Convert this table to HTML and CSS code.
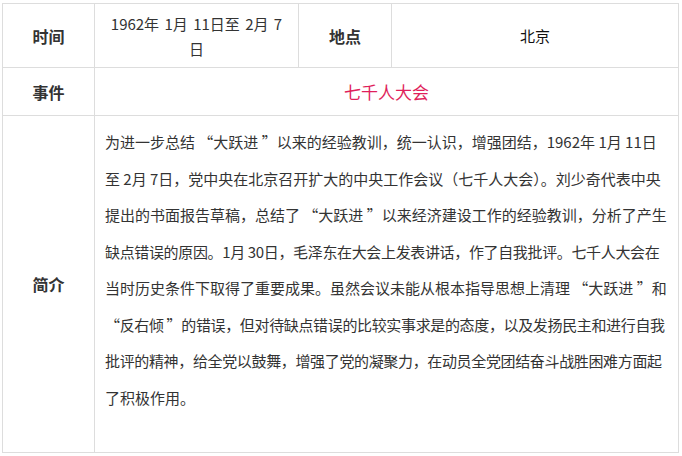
FILE: index.html
```html
<!DOCTYPE html>
<html lang="zh-CN">
<head>
  <meta charset="UTF-8">
  <meta name="viewport" content="width=device-width, initial-scale=1.0">
  <title>七千人大会</title>
  <link rel="stylesheet" href="styles.css">
</head>
<body>
  <div class="wrap">
    <table class="info">
      <colgroup>
        <col class="c-label">
        <col class="c-time">
        <col class="c-label2">
        <col class="c-place">
      </colgroup>
      <tr class="row-top">
        <th>时间</th>
        <td class="time">1962年 1月 11日至 2月 7<br>日</td>
        <th>地点</th>
        <td class="place">北京</td>
      </tr>
      <tr class="row-event">
        <th>事件</th>
        <td colspan="3" class="event">七千人大会</td>
      </tr>
      <tr class="row-desc">
        <th>简介</th>
        <td colspan="3" class="desc">为进一步总结 “大跃进 ”以来的经验教训，统一认识，增强团结，1962年 1月 11日<br>至 2月 7日，党中央在北京召开扩大的中央工作会议（七千人大会）。刘少奇代表中央<br>提出的书面报告草稿，总结了 “大跃进 ”以来经济建设工作的经验教训，分析了产生<br><span class="tight">缺点错误的原因。1月 30日，毛泽东在大会上发表讲话，作了自我批评。七千人大会在</span><br>当时历史条件下取得了重要成果。虽然会议未能从根本指导思想上清理 “大跃进 ”和<br><span class="tight">“反右倾 ”的错误，但对待缺点错误的比较实事求是的态度，以及发扬民主和进行自我</span><br><span class="tight">批评的精神，给全党以鼓舞，增强了党的凝聚力，在动员全党团结奋斗战胜困难方面起</span><br>了积极作用。</td>
      </tr>
    </table>
  </div>
</body>
</html>
```

FILE: styles.css
```css
body { margin:0; background:#fff; font-family:"Noto Sans CJK SC","Noto Sans",sans-serif; color:#333; }
.wrap { padding:3px 0 0 2px; }
.info { width:676px; border-collapse:collapse; table-layout:fixed; }
.c-label { width:92px; }
.c-time { width:204px; }
.c-label2 { width:93px; }
.c-place { width:287px; }
th, td { border:1px solid #ddd; padding:0 10px; text-align:center; vertical-align:middle; }
th { font-size:16px; font-weight:bold; color:#333; }
td { font-size:15px; }
.row-top { height:64px; }
.row-event { height:48px; }
.time { line-height:25px; word-spacing:2px; padding:0 6px; }
.place { color:#111; }
.event { color:#e01f5c; font-size:17px; }
.desc { text-align:left; vertical-align:top; line-height:36.5px; padding:8px 2px 36px 10px; white-space:nowrap; }
.tight { letter-spacing:-0.35px; }
```
